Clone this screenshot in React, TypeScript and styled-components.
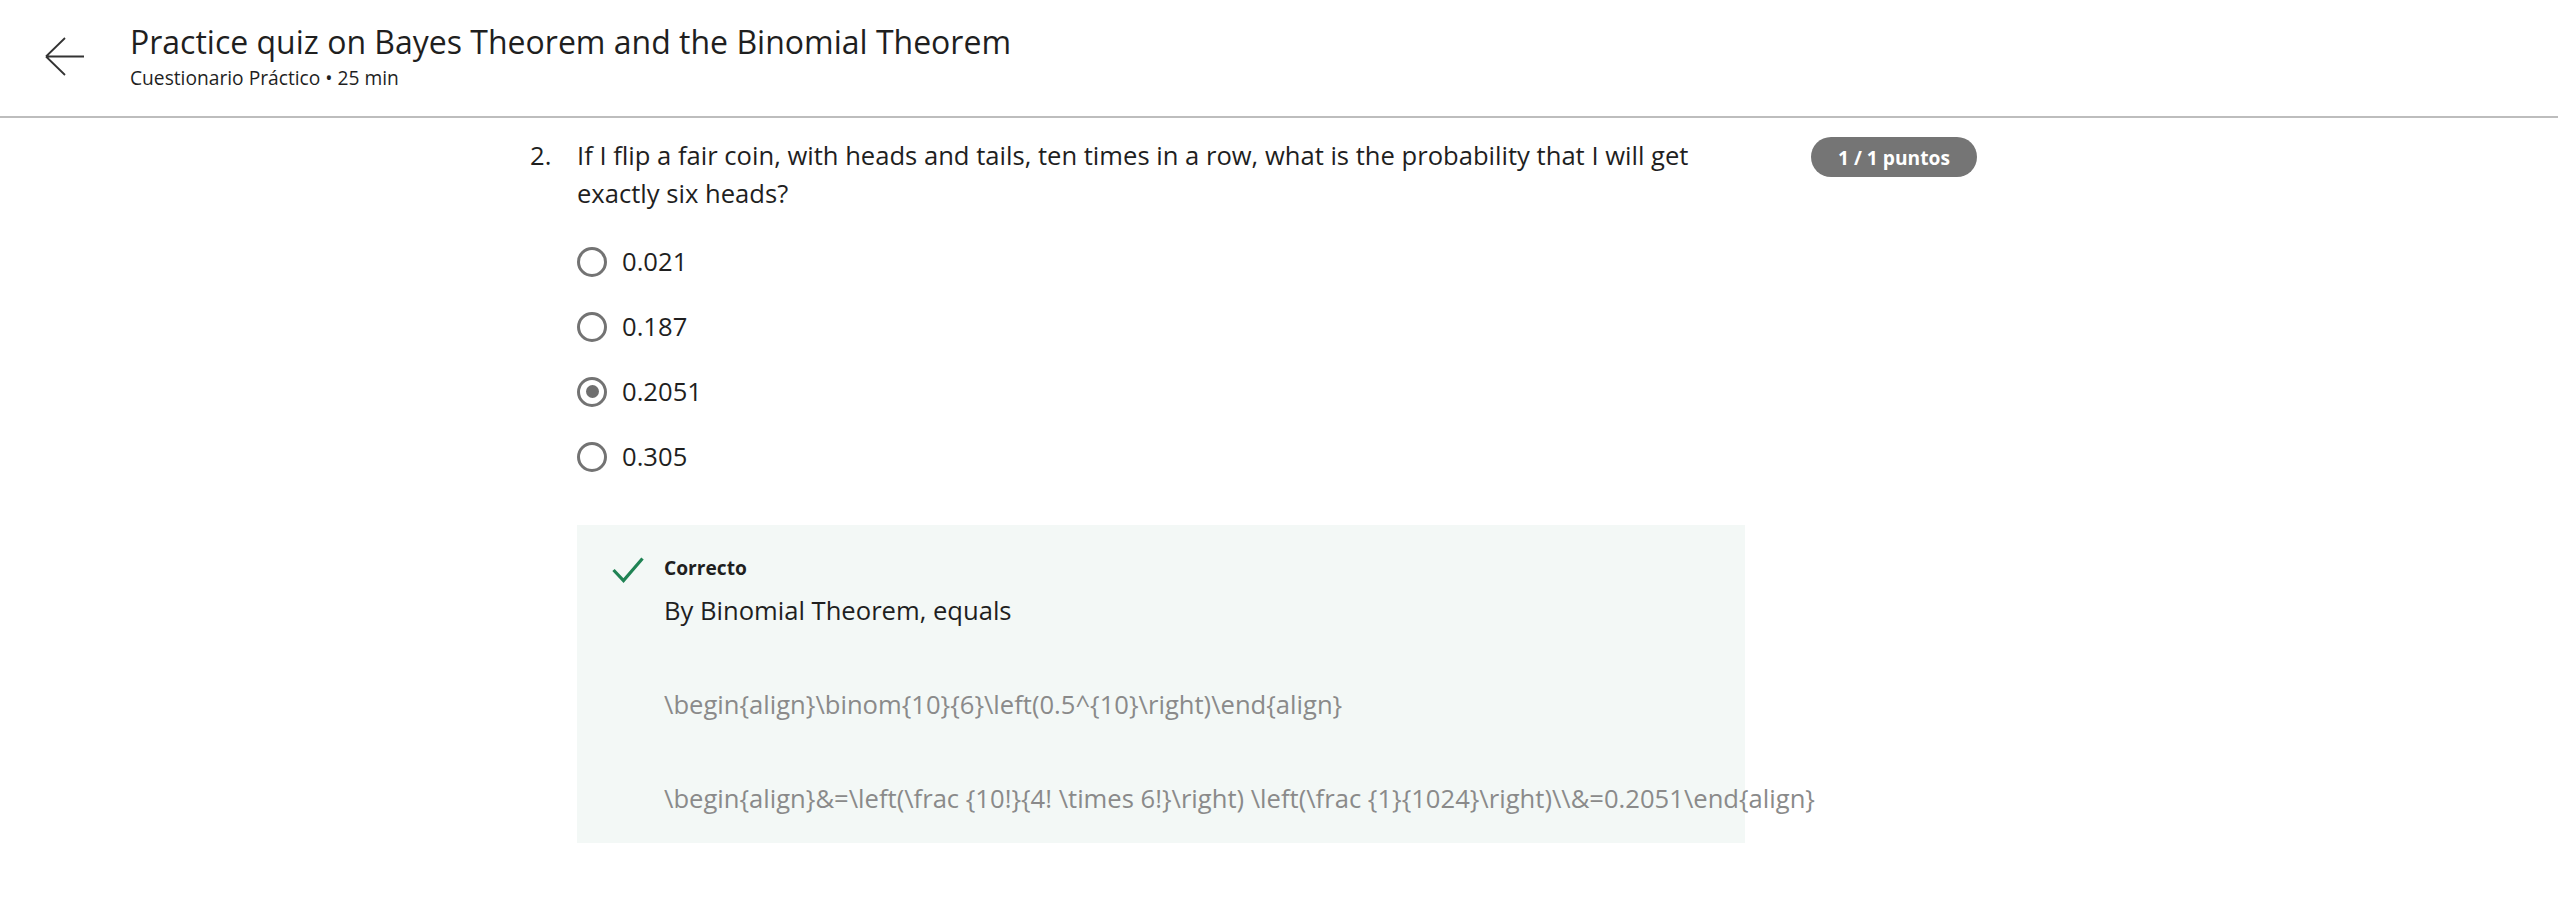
import React from "react";
import styled, { createGlobalStyle } from "styled-components";

const Global = createGlobalStyle`
  html, body { margin: 0; padding: 0; background: #ffffff; }
  body { font-family: "Open Sans", "Noto Sans", Arial, sans-serif; color: #1f1f1f; }
  * { box-sizing: border-box; }
`;

const Header = styled.header`
  display: flex;
  align-items: flex-start;
  padding: 22px 0 26px 46px;
  border-bottom: 2px solid #bdbdbd;
`;

const BackButton = styled.button`
  display: flex;
  align-items: center;
  justify-content: center;
  width: 40px;
  height: 40px;
  margin: 15px 45px 0 -1px;
  padding: 0;
  border: none;
  background: transparent;
  color: #333333;
  cursor: pointer;
`;

const TitleBlock = styled.div`
  display: flex;
  flex-direction: column;
  gap: 3px;
`;

const Title = styled.h1`
  margin: 0;
  font-size: 32px;
  line-height: 40px;
  font-weight: 400;
  color: #1f1f1f;
`;

const Subtitle = styled.div`
  font-size: 19.2px;
  line-height: 25px;
  color: #1f1f1f;
`;

const Main = styled.main`
  padding: 19px 0 40px 530px;
`;

const QuestionRow = styled.div`
  display: flex;
  align-items: flex-start;
`;

const Number = styled.div`
  width: 47px;
  flex: none;
  font-size: 25.6px;
  line-height: 38.4px;
`;

const QuestionBody = styled.div`
  width: 1168px;
  flex: none;
  display: flex;
  flex-direction: column;
`;

const Prompt = styled.p`
  margin: 0;
  font-size: 25.6px;
  line-height: 38.4px;
`;

const Options = styled.div`
  display: flex;
  flex-direction: column;
  gap: 25px;
  margin-top: 28px;
`;

const Option = styled.label`
  display: flex;
  align-items: center;
  gap: 15px;
  height: 40px;
  font-size: 25.6px;
  color: #1f1f1f;
`;

const Radio = styled.span<{ $checked?: boolean }>`
  width: 30px;
  height: 30px;
  flex: none;
  border-radius: 50%;
  border: 3px solid #737373;
  background: #ffffff;
  display: flex;
  align-items: center;
  justify-content: center;
  &::after {
    content: "";
    display: ${(p) => (p.$checked ? "block" : "none")};
    width: 13px;
    height: 13px;
    border-radius: 50%;
    background: #6f6f6f;
  }
`;

const Feedback = styled.section`
  margin-top: 48px;
  background: #f3f8f6;
  display: flex;
  align-items: flex-start;
  gap: 20px;
  padding: 31px 0 25px 35px;
`;

const CheckIcon = styled.svg`
  flex: none;
  width: 32px;
  height: 26px;
  margin-top: 1px;
`;

const FeedbackContent = styled.div`
  display: flex;
  flex-direction: column;
  white-space: nowrap;
`;

const Status = styled.div`
  font-size: 19.2px;
  line-height: 24px;
  font-weight: 700;
  color: #1f1f1f;
`;

const Explanation = styled.p`
  margin: 12px 0 0;
  font-size: 25.6px;
  line-height: 38px;
  color: #1f1f1f;
`;

const Latex = styled.p`
  margin: 56px 0 0;
  font-size: 25.6px;
  line-height: 38px;
  color: #8a8a8a;
`;

const Badge = styled.div`
  flex: none;
  margin: 0 0 0 66px;
  height: 40px;
  padding: 0 27px;
  border-radius: 20px;
  background: #757575;
  color: #ffffff;
  font-size: 19.2px;
  font-weight: 700;
  display: flex;
  align-items: center;
  white-space: nowrap;
`;

const options = [
  { label: "0.021", checked: false },
  { label: "0.187", checked: false },
  { label: "0.2051", checked: true },
  { label: "0.305", checked: false },
];

export default function App() {
  return (
    <>
      <Global />
      <Header>
        <BackButton aria-label="Back">
          <svg width="40" height="40" viewBox="0 0 40 40" fill="none">
            <path d="M1 19.5 H39 M1 19.5 L20 1 M1 19.5 L20 38" stroke="#333333" strokeWidth="1.8" />
          </svg>
        </BackButton>
        <TitleBlock>
          <Title>Practice quiz on Bayes Theorem and the Binomial Theorem</Title>
          <Subtitle>Cuestionario Práctico • 25 min</Subtitle>
        </TitleBlock>
      </Header>
      <Main>
        <QuestionRow>
          <Number>2.</Number>
          <QuestionBody>
            <Prompt>
              If I flip a fair coin, with heads and tails, ten times in a row, what is the probability that I will get exactly six heads?
            </Prompt>
            <Options>
              {options.map((o) => (
                <Option key={o.label}>
                  <Radio $checked={o.checked} />
                  {o.label}
                </Option>
              ))}
            </Options>
            <Feedback>
              <CheckIcon viewBox="0 0 32 26" fill="none">
                <path d="M1.5 13 L11.5 23.5 L30.5 1.5" stroke="#1f8354" strokeWidth="3.2" />
              </CheckIcon>
              <FeedbackContent>
                <Status>Correcto</Status>
                <Explanation>By Binomial Theorem, equals</Explanation>
                <Latex>{"\\begin{align}\\binom{10}{6}\\left(0.5^{10}\\right)\\end{align}"}</Latex>
                <Latex>{"\\begin{align}&=\\left(\\frac {10!}{4! \\times 6!}\\right) \\left(\\frac {1}{1024}\\right)\\\\&=0.2051\\end{align}"}</Latex>
              </FeedbackContent>
            </Feedback>
          </QuestionBody>
          <Badge>1 / 1 puntos</Badge>
        </QuestionRow>
      </Main>
    </>
  );
}
